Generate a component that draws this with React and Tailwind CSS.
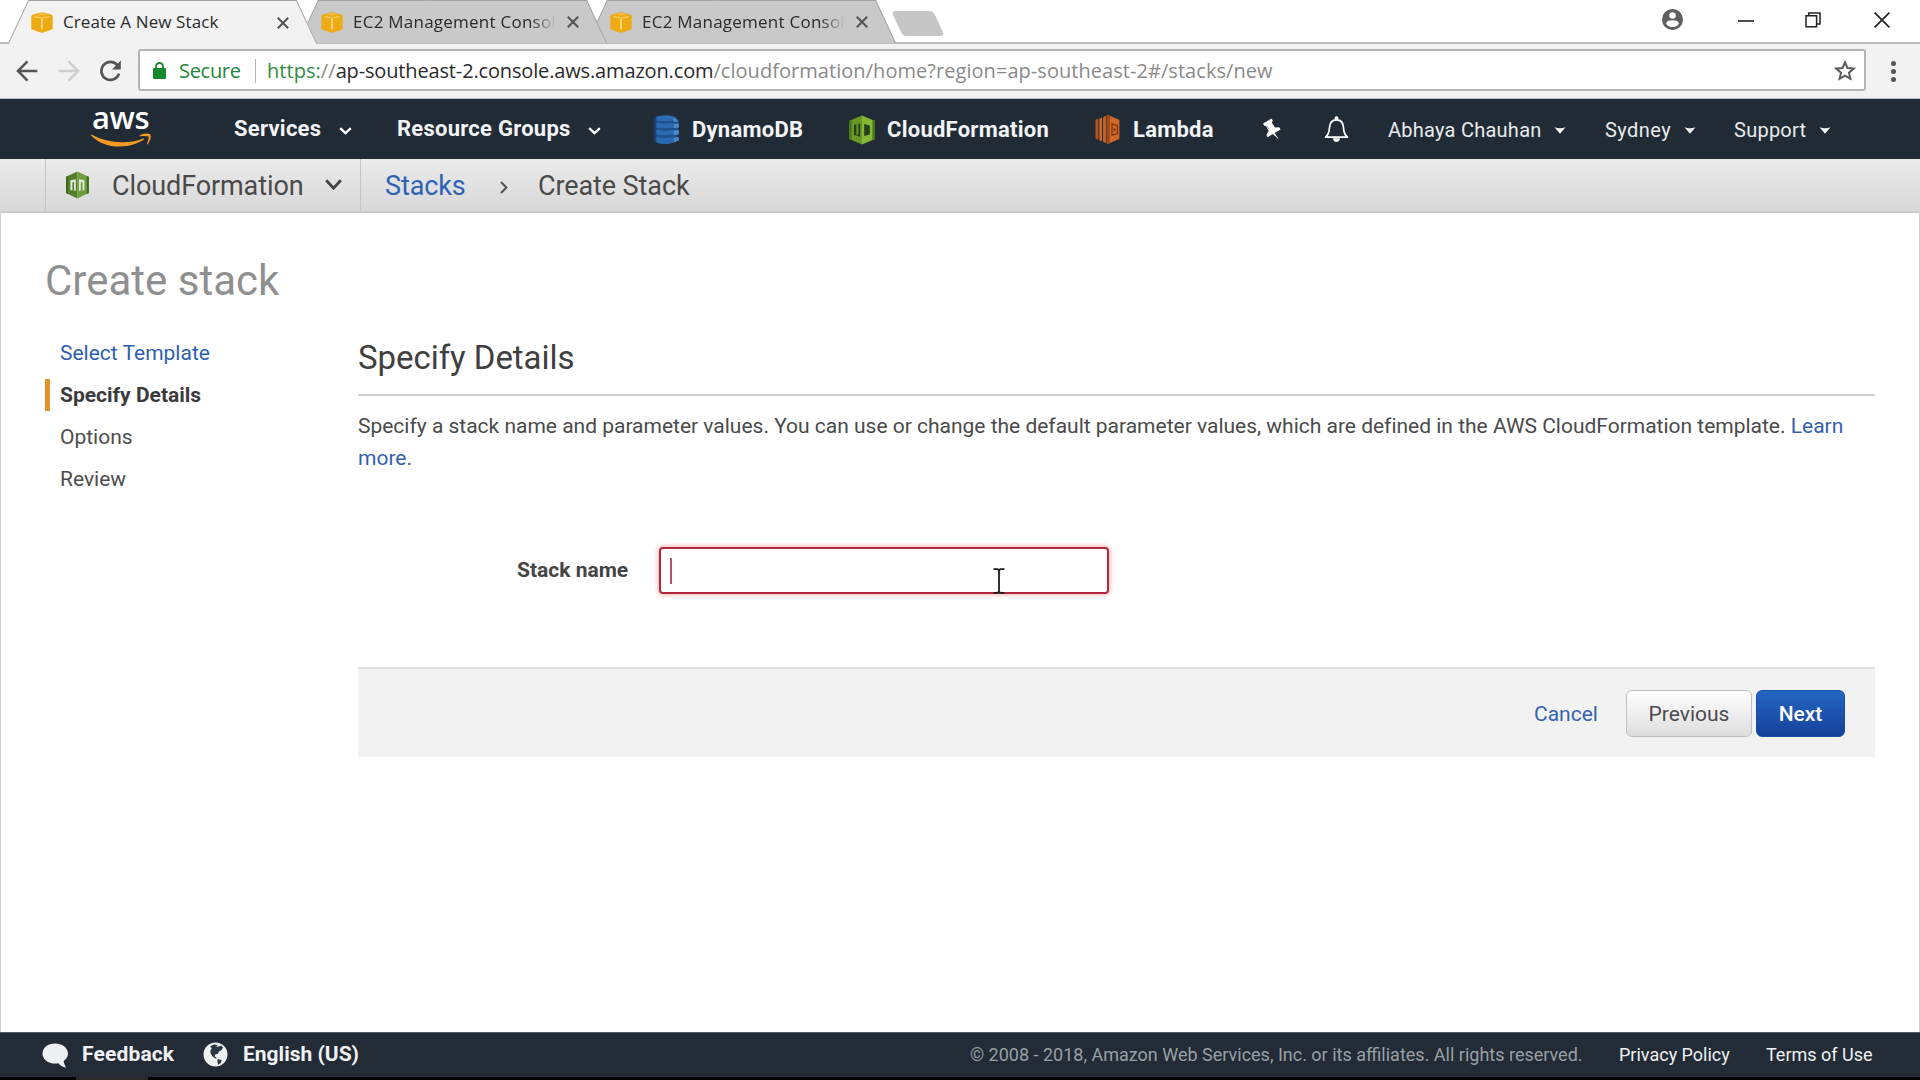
import React from "react";

const ROBOTO = "font-['Roboto','Liberation_Sans',sans-serif]";
const SEGOE = "font-['Open_Sans','Noto_Sans',sans-serif]";

/* ---------- icons ---------- */

function Cube() {
  return (
    <svg viewBox="0 0 22 21" className="h-[21px] w-[22px] shrink-0">
      <path d="M0.3 4.2 Q0.3 3.2 1.4 2.8 L9.6 0.5 Q11 0.1 12.4 0.5 L20.6 2.8 Q21.7 3.2 21.7 4.2 V17.2 L12.4 20.4 Q11 20.9 9.6 20.4 L0.3 17.2 Z" fill="#ecab12" />
      <path d="M5.6 2.2 L11 0.7 L16.4 2.2 L11 3.6 Z" fill="#f2bd45" />
      <path d="M3.6 4.6 L10.2 6 M11.8 6 L18.4 4.6" stroke="#f7d27a" strokeWidth="1.1" fill="none" />
      <path d="M11 6.2 V17.6" stroke="#f8d98e" strokeWidth="1.7" />
    </svg>
  );
}

function TabClose() {
  return (
    <svg viewBox="0 0 12 12" className="h-[12px] w-[12px] shrink-0">
      <path d="M0.8 0.8 L11.2 11.2 M11.2 0.8 L0.8 11.2" stroke="#555" strokeWidth="2.1" />
    </svg>
  );
}

function Back({ color, flip }) {
  return (
    <svg viewBox="0 0 22 22" className={flip ? "h-[22px] w-[22px] -scale-x-100" : "h-[22px] w-[22px]"}>
      <path d="M11.5 1.3 L1.9 11 L11.5 20.7 M2 11 H21.3" fill="none" stroke={color} strokeWidth="2.5" />
    </svg>
  );
}

function Reload() {
  return (
    <svg viewBox="0 0 23 22" className="h-[22px] w-[23px]">
      <path d="M18.3 5.1 A9 9 0 1 0 20 13.6" fill="none" stroke="#555" strokeWidth="2.7" />
      <path d="M21.8 0.6 V9.4 H13 Z" fill="#555" />
    </svg>
  );
}

function Lock() {
  return (
    <svg viewBox="0 0 13 17" className="h-[17px] w-[13px] shrink-0">
      <rect x="0" y="6" width="13" height="11" rx="1" fill="#15872c" />
      <path d="M3 7 V4.4 A3.5 3.4 0 0 1 10 4.4 V7" fill="none" stroke="#15872c" strokeWidth="1.8" />
    </svg>
  );
}

function Chevron({ w = 13, h = 8, color = "#fff", stroke = 2.4 }) {
  return (
    <svg width={w} height={h} viewBox={`0 0 ${w} ${h}`} className="shrink-0">
      <path d={`M1.2 1.2 L${w / 2} ${h - 1.8} L${w - 1.2} 1.2`} fill="none" stroke={color} strokeWidth={stroke} />
    </svg>
  );
}

function Caret() {
  return (
    <svg viewBox="0 0 12 7" className="h-[7px] w-[12px] shrink-0">
      <path d="M0.5 0.2 Q6 2.2 11.5 0.2 L6 6.8 Z" fill="#f2f2f2" />
    </svg>
  );
}

function DynamoIcon() {
  return (
    <svg viewBox="0 0 27 30" className="h-[30px] w-[27px] shrink-0">
      <path d="M3 2 Q13 -1 21 1 L25.5 5 L24 26 Q13 31 3 27.5 Z" fill="#1d4f8c" />
      <path d="M0.8 2.8 L3.4 1.4 V28 L0.8 26.4 Z" fill="#1c3f6d" />
      <path d="M3.4 1.6 Q12 -0.6 20.5 1.6 V5.4 Q12 7.2 3.4 5.4 Z" fill="#2c6cb2" />
      <path d="M3.4 7.6 Q12 9.6 20.5 7.6 V12.4 Q12 14.2 3.4 12.4 Z" fill="#2b6ab0" />
      <path d="M3.4 14.8 Q12 16.6 20.5 14.8 V19.2 Q12 21.4 3.4 19.2 Z" fill="#2b6ab0" />
      <path d="M3.4 21.8 Q12 24 20.5 21.8 V27.4 Q12 30.8 3.4 27.4 Z" fill="#2a68ad" />
      <path d="M20.5 1.8 L26 6.4 L20.5 7 Z M20.5 9 L26 8.6 V12.6 L20.5 13.2 Z M20.5 15.6 L26 15 V19.6 L20.5 20.2 Z M20.5 22.6 L26 22 V25.4 L20.5 27.4 Z" fill="#4a8acc" />
    </svg>
  );
}

function CloudFormationIcon() {
  return (
    <svg viewBox="0 0 28 30" className="h-[30px] w-[28px] shrink-0">
      <path d="M14 0.5 L1 6 V24 L14 29.5 Z" fill="#6a9a26" />
      <path d="M14 0.5 L27 6 V24 L14 29.5 Z" fill="#86b637" />
      <path d="M1 6 L3.6 5 V25.1 L1 24 Z M24.4 5 L27 6 V24 L24.4 25.1 Z" fill="#4c7719" />
      <path d="M6 9.8 L8.4 9.2 V20.6 L6 20 Z" fill="#25401c" />
      <path d="M10.4 8.8 L12.2 8.4 V21.6 L10.4 21.2 Z" fill="#25401c" />
      <path d="M16.2 9 L21.8 10.4 V19.6 L16.2 21 Z" fill="#25401c" />
      <path d="M8.4 19.4 L12.2 20 V21.6 L8.4 20.6 Z" fill="#25401c" />
    </svg>
  );
}

function BreadcrumbCfIcon() {
  return (
    <svg viewBox="0 0 25 28" className="h-[28px] w-[25px] shrink-0">
      <path d="M12.3 0.5 L1 5.8 V22 L12.3 27.5 Z" fill="#557f2b" />
      <path d="M12.3 0.5 L23.8 5.8 V22 L12.3 27.5 Z" fill="#6f9f3d" />
      <path d="M1 5.8 L3 4.9 V22.9 L1 22 Z M21.8 4.9 L23.8 5.8 V22 L21.8 22.9 Z" fill="#426a1f" />
      <path d="M5.4 9.2 L10.8 8.2 V19.8 L9 19.6 V11 L7.4 11.2 V19.4 L5.4 19 Z" fill="#e3e8dc" />
      <path d="M14 8.2 L19.4 9.2 V19 L17.6 19.4 V11.2 L15.8 11 V19.6 L14 19.9 Z" fill="#e3e8dc" />
    </svg>
  );
}

function LambdaIcon() {
  return (
    <svg viewBox="0 0 25 31" className="h-[31px] w-[25px] shrink-0">
      <path d="M0.5 5.8 L3.4 4.8 V25.8 L0.5 24.8 Z" fill="#b3561d" />
      <path d="M4.4 4.4 L7 3.4 V27.2 L4.4 26.2 Z" fill="#cf6a2a" />
      <path d="M8 3.2 L11.4 1.6 V29.2 L8 27.8 Z" fill="#c3602a" />
      <path d="M12.4 0.8 L24.4 6 V24.8 L12.4 30.2 Z" fill="#d36824" />
      <path d="M12.4 0.8 L15 2 V29 L12.4 30.2 Z" fill="#a44a17" />
      <path d="M17 9.8 L22.4 11.4 V19.6 L17 21.2 Z" fill="none" stroke="#7b3410" strokeWidth="1.3" />
      <path d="M18.8 13.2 L21 15.5 L18.8 17.8 Z" fill="#7b3410" />
    </svg>
  );
}

function Pin() {
  return (
    <svg viewBox="0 0 20 22" className="h-[22px] w-[20px] shrink-0">
      <path d="M1 5.6 L9.6 0.6 L10.9 2.8 L9.7 4.6 L13 9.4 L17.2 9.2 L18.6 11.4 L12.6 15 L17 21.6 L10.8 16 L5.6 19.2 L4.4 17 L6.6 13 L3.8 7.8 L2.2 7.8 Z" fill="#fff" />
      <path d="M4.8 7.8 L7 11.4" stroke="#7d8590" strokeWidth="0.9" />
    </svg>
  );
}

function Bell() {
  return (
    <svg viewBox="0 0 25 27" className="h-[27px] w-[25px] shrink-0">
      <circle cx="12.5" cy="2.2" r="1.9" fill="#fff" />
      <path d="M1.6 21.2 Q5.2 18 5.4 12.4 C5.6 6.6 8.2 3.8 12.5 3.8 C16.8 3.8 19.4 6.6 19.6 12.4 Q19.8 18 23.4 21.2 Z" fill="none" stroke="#fff" strokeWidth="1.7" strokeLinejoin="round" />
      <path d="M8.8 22.2 H16.2 Q15.4 26 12.5 26 Q9.6 26 8.8 22.2 Z" fill="#fff" />
    </svg>
  );
}

function Globe() {
  return (
    <svg viewBox="0 0 25 25" className="h-[25px] w-[25px] shrink-0">
      <circle cx="12.5" cy="12.5" r="12" fill="#eef0f1" />
      <path d="M7 4.4 L11 2.6 L14.6 3 L13.4 5 L15.8 4.6 L18 3.6 L20 5.4 L18.6 8 L16 9.4 L14.6 12 L12 12.6 L11.8 14.6 L14 16 L12.8 16.8 L9.6 14.6 L7.6 11.4 L7.4 8.4 L8.8 6.2 Z" fill="#2c3742" />
      <path d="M14.6 17 L18.6 18 L18 20.6 L15.4 23 L14.4 20 Z" fill="#2c3742" />
    </svg>
  );
}

/* ---------- browser chrome ---------- */

function Tab({ title, active, className, textClass }) {
  const fill = active ? "bg-[#f1f2f1] border-[#a3a3a3]" : "bg-[#c9c9c9] border-[#a3a3a3]";
  return (
    <div className={`relative flex w-[309px] shrink-0 items-center pt-px ${active ? "z-20 h-[44px]" : "h-[43px]"} ${className}`}>
      <div className={`absolute inset-y-0 left-[10px] w-[160px] -skew-x-[25deg] border-l-[1.5px] border-t ${fill}`} />
      <div className={`absolute inset-y-0 right-[10px] w-[160px] skew-x-[25deg] border-r-[1.5px] border-t ${fill}`} />
      <div className="relative ml-[23px] flex w-[248px] items-center">
        <Cube />
        <span className={`-mt-px ml-[10px] w-[201px] whitespace-nowrap text-[17px] leading-[28px] text-[#2b2b2b] ${SEGOE} ${textClass}`}>{title}</span>
      </div>
      <div className="relative -ml-[2px]">
        <TabClose />
      </div>
    </div>
  );
}

function TabStrip() {
  const fade = "tracking-[0.24px] [mask-image:linear-gradient(to_right,black_178px,transparent_203px)]";
  return (
    <div className="flex h-[44px] items-start border-b-2 border-[#bdbdbd] bg-white">
      <Tab title="Create A New Stack" active className="ml-[8px]" textClass="tracking-[0.1px]" />
      <Tab title="EC2 Management Consol" className="z-10 -ml-[19px]" textClass={fade} />
      <Tab title="EC2 Management Consol" className="-ml-[20px]" textClass={fade} />
      <div className="ml-[1px] mt-[11px] h-[25px] w-[42px] skew-x-[25deg] rounded-[4px] bg-[#c6c6c6]" />
      <div className="ml-auto mr-[30px] mt-[9px] flex items-center">
        <svg viewBox="0 0 20 20" className="h-[21px] w-[21px]">
          <circle cx="10" cy="10" r="10" fill="#5f5f5f" />
          <circle cx="10" cy="6.3" r="3.1" fill="#fff" />
          <path d="M3.9 14 Q4.2 10.8 10 10.8 Q15.8 10.8 16.1 14 Q13.8 17.2 10 17.2 Q6.2 17.2 3.9 14 Z" fill="#fff" />
        </svg>
        <svg viewBox="0 0 16 2" className="ml-[55px] mt-[2px] h-[2px] w-[16px]"><path d="M0 1 H16" stroke="#222" strokeWidth="1.6" /></svg>
        <svg viewBox="0 0 16 16" className="ml-[51px] h-[16px] w-[16px]">
          <path d="M1 3.8 H11.6 V14.8 H1 Z M3.8 3.8 V1 H15 V12 H11.6" fill="none" stroke="#222" strokeWidth="1.5" />
        </svg>
        <svg viewBox="0 0 16 16" className="ml-[53px] h-[16px] w-[16px]"><path d="M0.6 0.6 L15.4 15.4 M15.4 0.6 L0.6 15.4" stroke="#222" strokeWidth="1.6" /></svg>
      </div>
    </div>
  );
}

function AddressBar() {
  return (
    <div className="flex h-[55px] items-start border-b border-[#b9c2c6] bg-[#f1f2f1] pt-[5px]">
      <div className="flex h-[43px] w-[138px] shrink-0 items-center pl-[16px]">
        <Back color="#555" />
        <div className="ml-[20px]"><Back color="#d0d0d0" flip /></div>
        <div className="ml-[19px]"><Reload /></div>
      </div>
      <div className={`flex h-[42px] w-[1728px] shrink-0 items-center rounded-[3px] border-2 border-[#b4b4b4] bg-white pl-[13px] pt-px ${SEGOE} text-[20px] leading-[30px]`}>
        <Lock />
        <span className="ml-[13px] w-[76px] tracking-[-0.3px] text-[#21873a]">Secure</span>
        <span className="h-[24px] w-px bg-[#b5b5b5]" />
        <span className="ml-[11px] whitespace-nowrap text-[#8a8a8a]">
          <span className="tracking-[0.05px]"><span className="text-[#338a44]">https:</span>//</span>
          <span className="tracking-[-0.15px] text-[#2a2a2a]">ap-southeast-2.console.aws.amazon.com</span>
          <span className="tracking-[0.05px]">/cloudformation/home?region=ap-southeast-2#/stacks/new</span>
        </span>
        <svg viewBox="0 0 22 21" className="ml-auto mr-[8px] h-[21px] w-[22px]">
          <path d="M11 2.4 L13.5 8 L19.7 8.6 L15 12.7 L16.4 18.8 L11 15.6 L5.6 18.8 L7 12.7 L2.3 8.6 L8.5 8 Z" fill="none" stroke="#5a5a5a" strokeWidth="2" />
        </svg>
      </div>
      <div className="ml-[25px] mt-[12px] flex flex-col gap-[3px]">
        <i className="h-[5px] w-[5px] rounded-full bg-[#555]" />
        <i className="h-[5px] w-[5px] rounded-full bg-[#555]" />
        <i className="h-[5px] w-[5px] rounded-full bg-[#555]" />
      </div>
    </div>
  );
}

/* ---------- console ---------- */

function AwsLogo() {
  return (
    <div className="flex h-[44px] w-[64px] shrink-0 flex-col pt-px">
      <div className={`-mt-[6px] h-[30px] pl-[2px] text-[31px] font-semibold leading-[30px] tracking-[-0.4px] text-white ${SEGOE}`}>aws</div>
      <svg viewBox="0 0 62 15" className="mt-px h-[15px] w-[62px]">
        <path d="M1.4 1.6 Q0.4 1.2 1 2.4 C8 9.6 18 13.6 30 13.6 C39 13.6 48 10.8 54 6.6 Q55 5.2 53.2 5.4 C38 11.4 18 10.6 1.4 1.6 Z" fill="#f29a23" />
        <path d="M49.6 2.4 Q54 -0.4 60 1 Q62.4 4.6 57.8 11.2 Q56.8 11.8 57 10.6 Q59 6 58.6 3.6 Q55.6 2.6 49.8 3.2 Z" fill="#f29a23" />
      </svg>
    </div>
  );
}

function NavBar() {
  const b = "shrink-0 whitespace-nowrap text-[22px] font-bold leading-[26px] tracking-[0.25px] text-[#f3f4f5]";
  const r = "shrink-0 whitespace-nowrap text-[20px] leading-[26px] tracking-[0.25px] text-[#e9ebec]";
  return (
    <nav className={`flex h-[60px] items-center bg-[#212b36] pl-[90px] ${ROBOTO}`}>
      <AwsLogo />
      <span className={`${b} ml-[80px] w-[105px]`}>Services</span>
      <div className="mt-[3px]"><Chevron /></div>
      <span className={`${b} ml-[45px] w-[191px]`}>Resource Groups</span>
      <div className="mt-[3px]"><Chevron /></div>
      <div className="ml-[52px] mt-[1px]"><DynamoIcon /></div>
      <span className={`${b} ml-[12px] mt-[2px] w-[156px]`}>DynamoDB</span>
      <div className="mt-[1px]"><CloudFormationIcon /></div>
      <span className={`${b} ml-[11px] mt-[2px] w-[208px]`}>CloudFormation</span>
      <div className="mt-[1px]"><LambdaIcon /></div>
      <span className={`${b} ml-[13px] mt-[2px] w-[129px]`}>Lambda</span>
      <Pin />
      <div className="ml-[42px] mt-[1px]"><Bell /></div>
      <span className={`${r} ml-[39px] mt-[1px] w-[166px]`}>Abhaya Chauhan</span>
      <div className="mt-[3px]"><Caret /></div>
      <span className={`${r} ml-[39px] mt-[1px] w-[79px] tracking-[0.45px]`}>Sydney</span>
      <div className="mt-[3px]"><Caret /></div>
      <span className={`${r} ml-[38px] mt-[1px] w-[85px]`}>Support</span>
      <div className="mt-[3px]"><Caret /></div>
    </nav>
  );
}

function Breadcrumbs() {
  const t = "shrink-0 whitespace-nowrap pt-[2px] text-[27px] leading-[32px] tracking-[-0.1px]";
  return (
    <div className={`flex h-[54px] items-center border-b-2 border-[#c9c9c9] bg-gradient-to-b from-[#ebebeb] to-[#d8d8d8] pl-[45px] text-[#4a4a4a] ${ROBOTO}`}>
      <div className="flex h-full w-[316px] items-center border-x border-[#c4c4c4] pl-[19px]">
        <BreadcrumbCfIcon />
        <span className={`${t} ml-[22px] w-[213px]`}>CloudFormation</span>
        <div className="-mt-px"><Chevron w={17} h={11} color="#444" stroke={2.8} /></div>
      </div>
      <span className={`${t} ml-[24px] w-[115px] text-[#2f62b5]`}>Stacks</span>
      <svg viewBox="0 0 8 13" className="mt-[4px] h-[13px] w-[8px]"><path d="M1 1 L6.4 6.5 L1 12" fill="none" stroke="#555" strokeWidth="2" /></svg>
      <span className={`${t} ml-[30px]`}>Create Stack</span>
    </div>
  );
}

function Steps() {
  return (
    <ul className="flex w-[312px] shrink-0 flex-col pt-[1px] text-[21px] leading-[42px] text-[#4d4d4d]">
      <li className="pl-[14px] text-[#2f5fae]">Select Template</li>
      <li className="flex items-center font-bold text-[#3b3b3b]">
        <i className="-ml-px mr-[10px] h-[32px] w-[5px] bg-[#e0952b]" />Specify Details
      </li>
      <li className="pl-[14px]">Options</li>
      <li className="pl-[14px]">Review</li>
    </ul>
  );
}

function IBeam() {
  return (
    <svg viewBox="0 0 12 26" className="absolute left-[332px] top-[19px] h-[26px] w-[12px]">
      <path d="M0.5 1.2 H4.6 L6 2.2 L7.4 1.2 H11.5 M6 2 V24 M0.5 24.8 H4.6 L6 23.8 L7.4 24.8 H11.5" fill="none" stroke="#1c1c1c" strokeWidth="1.8" />
    </svg>
  );
}

function Details() {
  return (
    <section className="w-[1517px] shrink-0 pt-[7px]">
      <h2 className="h-[58px] border-b-2 border-[#cfcfcf] text-[33px] leading-[39px] tracking-[-0.05px] text-[#404040]">Specify Details</h2>
      <p className="mt-[15px] text-[21px] leading-[31.5px] tracking-[-0.008px] text-[#4a4a4a]">
        Specify a stack name and parameter values. You can use or change the default parameter values, which are defined in the AWS CloudFormation template.{" "}
        <a className="text-[#3461ab]">Learn<br />more.</a>
      </p>
      <div className="mt-[73px] flex h-[47px] items-center pl-[159px]">
        <label className="w-[142px] text-[21px] font-bold text-[#454545]">Stack name</label>
        <div className="relative flex h-[47px] w-[450px] items-center rounded-[4px] border-2 border-[#b3283a] bg-white pl-[9px] shadow-[0_0_5px_1px_#f7b5b0]">
          <i className="h-[26px] w-[1.5px] bg-[#a8586a]" />
          <IBeam />
        </div>
      </div>
      <div className="mt-[73px] flex h-[90px] items-center border-t-2 border-[#e0e0e0] bg-[#f2f2f2] pr-[30px] text-[21px] leading-[26px]">
        <a className="ml-auto w-[92px] pt-px text-[#3663ae]">Cancel</a>
        <button className="flex h-[47px] w-[126px] items-center justify-center rounded-[6px] border-[1.5px] border-[#c0c0c0] bg-gradient-to-b from-white to-[#dedede] pt-[1px] text-[#4b4b4b]">Previous</button>
        <button className="ml-[4px] flex h-[47px] w-[89px] items-center justify-center rounded-[6px] border border-[#1b4da4] bg-gradient-to-b from-[#2366c4] to-[#17419a] pt-[1px] font-medium text-white">Next</button>
      </div>
    </section>
  );
}

function Footer() {
  return (
    <footer className={`flex h-[45px] items-center border-t border-[#515a62] bg-[#222b36] pl-[42px] ${ROBOTO}`}>
      <svg viewBox="0 0 27 25" className="h-[25px] w-[27px] shrink-0">
        <path d="M13 0.5 C20 0.5 26 4.6 26 10.4 C26 13.6 24.2 16.2 21.6 18 Q22 21.6 24 24.4 Q18.6 23.6 16.4 20.2 Q14.8 20.5 13 20.5 C6 20.5 0.5 16.4 0.5 10.4 C0.5 4.6 6 0.5 13 0.5 Z" fill="#eef0f1" />
      </svg>
      <span className="mb-[2px] ml-[13px] w-[121px] whitespace-nowrap text-[21px] font-bold leading-[25px] tracking-[0.15px] text-[#f0f1f2]">Feedback</span>
      <div className="mb-px"><Globe /></div>
      <span className="mb-[2px] ml-[15px] whitespace-nowrap text-[21px] font-bold leading-[25px] text-[#f0f1f2]">English (US)</span>
      <span className="ml-auto w-[649px] whitespace-nowrap text-[18px] leading-[22px] text-[#98a0a6]">© 2008 - 2018, Amazon Web Services, Inc. or its affiliates. All rights reserved.</span>
      <span className="w-[147px] whitespace-nowrap text-[18px] leading-[22px] text-[#f0f1f2]">Privacy Policy</span>
      <span className="mr-[47px] w-[107px] whitespace-nowrap text-[18px] leading-[22px] text-[#f0f1f2]">Terms of Use</span>
    </footer>
  );
}

export default function App() {
  return (
    <div className="flex h-[1080px] w-[1920px] flex-col overflow-hidden bg-white">
      <TabStrip />
      <AddressBar />
      <NavBar />
      <Breadcrumbs />
      <main className={`flex flex-1 flex-col border-x border-[#d4d4d4] bg-white pl-[45px] ${ROBOTO}`}>
        <h1 className="-ml-px mt-[43px] h-[48px] text-[42px] leading-[50px] text-[#8f8f8f]">Create stack</h1>
        <div className="mt-[27px] flex items-start">
          <Steps />
          <Details />
        </div>
      </main>
      <Footer />
      <div className="flex h-[3px] bg-black">
        <i className="ml-[76px] w-[72px] bg-[#2b2b2b]" />
      </div>
    </div>
  );
}
